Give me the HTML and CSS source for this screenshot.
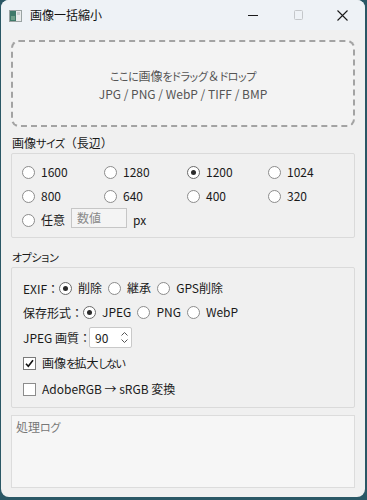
FILE: index.html
```html
<!DOCTYPE html>
<html lang="ja">
<head>
<meta charset="utf-8">
<title>画像一括縮小</title>
<link rel="stylesheet" href="styles.css">
</head>
<body>
<div class="window">
  <div class="titlebar">
    <svg class="app-icon" width="13" height="12" viewBox="0 0 13 12">
      <rect x="0.5" y="0.5" width="12" height="11" fill="#e9ecec" stroke="#9aa3a3"/>
      <rect x="1" y="1" width="6" height="10" fill="#3f7a6a"/>
      <rect x="2" y="6" width="4" height="4" fill="#6fa08a"/>
      <rect x="8" y="2" width="3" height="3" fill="#c9cfcf"/>
    </svg>
    <span class="title">画像一括縮小</span>
    <div class="controls">
      <span class="ctl"><svg width="10" height="10" viewBox="0 0 10 10"><path d="M0 5.5H10" stroke="#1a1a1a" stroke-width="1"/></svg></span>
      <span class="ctl"><svg width="10" height="10" viewBox="0 0 10 10"><rect x="1.5" y="0.5" width="8" height="9" rx="1" fill="none" stroke="#c4c7ca"/></svg></span>
      <span class="ctl"><svg width="11" height="11" viewBox="0 0 11 11"><path d="M0.5 0.5L10.5 10.5M10.5 0.5L0.5 10.5" stroke="#1a1a1a" stroke-width="1.1"/></svg></span>
    </div>
  </div>
  <div class="content">
    <div class="dropzone">
      <div><span class="k">ここに</span>画像<span class="k">をドラッグ</span>＆<span class="k">ドロップ</span></div>
      <div>JPG / PNG / WebP / TIFF / BMP</div>
    </div>

    <div class="section-label">画像<span class="k">サイズ</span>（長辺）</div>
    <div class="group size-group">
      <div class="size-grid">
        <label class="opt"><span class="radio"></span>1600</label>
        <label class="opt"><span class="radio"></span>1280</label>
        <label class="opt"><span class="radio checked"></span>1200</label>
        <label class="opt"><span class="radio"></span>1024</label>
        <label class="opt"><span class="radio"></span>800</label>
        <label class="opt"><span class="radio"></span>640</label>
        <label class="opt"><span class="radio"></span>400</label>
        <label class="opt"><span class="radio"></span>320</label>
      </div>
      <div class="row custom-row">
        <label class="opt"><span class="radio"></span>任意</label>
        <span class="textbox">数値</span>
        <span class="unit">px</span>
      </div>
    </div>

    <div class="section-label second"><span class="k">オプション</span></div>
    <div class="group options">
      <div class="row r24">
        <span class="lead">EXIF：</span>
        <label class="opt"><span class="radio checked"></span>削除</label>
        <label class="opt"><span class="radio"></span>継承</label>
        <label class="opt"><span class="radio"></span>GPS削除</label>
      </div>
      <div class="row r24">
        <span class="lead">保存形式：</span>
        <label class="opt"><span class="radio checked"></span>JPEG</label>
        <label class="opt"><span class="radio"></span>PNG</label>
        <label class="opt"><span class="radio"></span>WebP</label>
      </div>
      <div class="row r26">
        <span class="lead tight">JPEG 画質：</span>
        <span class="spin"><span class="spin-val">90</span><span class="spin-btns">
          <svg width="7" height="4" viewBox="0 0 7 4"><path d="M0.5 3.5L3.5 0.5L6.5 3.5" fill="none" stroke="#555"/></svg>
          <svg width="7" height="4" viewBox="0 0 7 4"><path d="M0.5 0.5L3.5 3.5L6.5 0.5" fill="none" stroke="#555"/></svg>
        </span></span>
      </div>
      <div class="row r26">
        <label class="opt"><span class="check checked"><svg width="11" height="11" viewBox="0 0 11 11"><path d="M2 5.8L4.3 8.3L9 2.2" fill="none" stroke="#111" stroke-width="1.6"/></svg></span>画像<span class="k h">を</span>拡大<span class="k h">しない</span></label>
      </div>
      <div class="row r26">
        <label class="opt"><span class="check"></span>AdobeRGB → sRGB 変換</label>
      </div>
    </div>

    <div class="log">処理<span class="k">ログ</span></div>
  </div>
</div>
</body>
</html>
```

FILE: styles.css
```css
* { box-sizing: border-box; }
html, body { margin: 0; padding: 0; }
body {
  background: #2a5765;
  width: 367px;
  height: 500px;
  overflow: hidden;
  font-family: "Noto Sans CJK JP", "Noto Sans", sans-serif;
  font-size: 12px;
  color: #1a1a1a;
}
.k {
  font-size: 11px;
  font-feature-settings: "palt";
  letter-spacing: -0.4px;
}
.k.h { letter-spacing: -1.6px; }
.window {
  margin: 0 2px 0 1px;
  height: 497px;
  background: #f0f0f0;
  border-radius: 8px;
  overflow: hidden;
  display: flex;
  flex-direction: column;
}
.titlebar {
  height: 30px;
  flex: none;
  background: #eef2f6;
  display: flex;
  align-items: center;
  padding-left: 8px;
}
.app-icon { margin-top: 1px; }
.title {
  margin-left: 8px;
  font-size: 12px;
  line-height: 16px;
  color: #111;
}
.controls {
  margin-left: auto;
  display: flex;
  height: 30px;
}
.ctl {
  width: 45px;
  display: flex;
  align-items: center;
  justify-content: center;
}
.content {
  flex: 1;
  padding: 10px 10px 9px 10px;
  display: flex;
  flex-direction: column;
}
.dropzone {
  height: 87px;
  border: 2px dashed #a3a3a3;
  border-radius: 8px;
  background: #f3f3f3;
  display: flex;
  flex-direction: column;
  align-items: center;
  justify-content: center;
  color: #555;
  line-height: 17px;
  padding-top: 2px;
}
.section-label {
  margin-top: 8px;
  margin-bottom: 2px;
  line-height: 16px;
  padding-left: 1px;
}
.section-label.second { margin-top: 11px; }
.group {
  border: 1px solid #dadada;
  border-radius: 2px;
  background: #f0f0f0;
}
.size-group { padding: 6px 9px 5px 10px; }
.size-grid {
  display: grid;
  grid-template-columns: 82px 83px 81px 1fr;
  grid-auto-rows: 24px;
}
.row {
  display: flex;
  align-items: center;
  height: 24px;
}
.opt {
  display: flex;
  align-items: center;
  height: 24px;
  line-height: 16px;
}
.radio {
  width: 13px;
  height: 13px;
  border-radius: 50%;
  border: 1px solid #8c8c8c;
  background: #fff;
  margin-right: 6px;
  flex: none;
  display: flex;
  align-items: center;
  justify-content: center;
}
.radio.checked { border-color: #6a6a6a; }
.radio.checked::after {
  content: "";
  width: 5px;
  height: 5px;
  border-radius: 50%;
  background: #2b2b2b;
}
.custom-row .textbox {
  margin-left: 6px;
  width: 56px;
  height: 20px;
  margin-top: -4px;
  border: 1px solid #c6c6c6;
  background: #f4f4f4;
  color: #8a8a8a;
  padding-left: 5px;
  line-height: 18px;
}
.unit { margin-left: 6px; margin-top: -2px; }
.options { padding: 8px 10px 5px 11px; }
.r24 { height: 24px; }
.r26 { height: 26px; }
.lead { margin-right: 0; }
.lead.tight { margin-right: -2px; }
.options .opt { margin-right: 6px; }
.spin {
  display: flex;
  width: 43px;
  height: 21px;
  border: 1px solid #c9c9c9;
  background: #fff;
  border-radius: 2px;
}
.spin-val { flex: 1; padding-left: 5px; line-height: 19px; }
.spin-btns {
  width: 13px;
  display: flex;
  flex-direction: column;
  align-items: center;
  justify-content: center;
  gap: 3px;
}
.check {
  width: 13px;
  height: 13px;
  border: 1px solid #8c8c8c;
  background: #fff;
  margin-right: 6px;
  flex: none;
  display: flex;
  align-items: center;
  justify-content: center;
}
.check.checked { border-color: #7a7a7a; }
.log {
  margin-top: 7px;
  height: 73px;
  border: 1px solid #dcdcdc;
  background: #f6f6f6;
  color: #777;
  padding: 3px 4px;
  line-height: 16px;
}
```
